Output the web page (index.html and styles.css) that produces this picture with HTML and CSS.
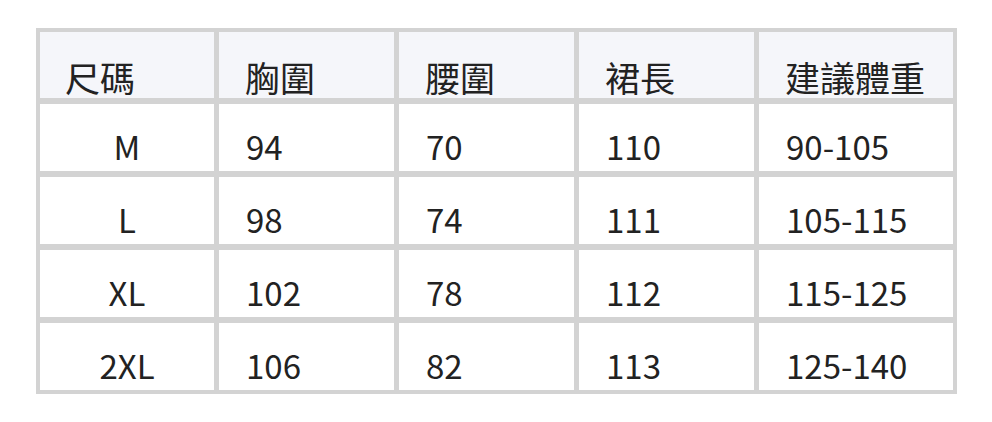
FILE: index.html
```html
<!DOCTYPE html>
<html lang="zh-Hant">
<head>
<meta charset="utf-8">
<title>尺碼表</title>
<link rel="stylesheet" href="styles.css">
</head>
<body>
<div class="size-table">
  <div class="cell head first">尺碼</div>
  <div class="cell head">胸圍</div>
  <div class="cell head">腰圍</div>
  <div class="cell head">裙長</div>
  <div class="cell head">建議體重</div>

  <div class="cell center">M</div>
  <div class="cell">94</div>
  <div class="cell">70</div>
  <div class="cell">110</div>
  <div class="cell">90-105</div>

  <div class="cell center">L</div>
  <div class="cell">98</div>
  <div class="cell">74</div>
  <div class="cell">111</div>
  <div class="cell">105-115</div>

  <div class="cell center">XL</div>
  <div class="cell">102</div>
  <div class="cell">78</div>
  <div class="cell">112</div>
  <div class="cell">115-125</div>

  <div class="cell center">2XL</div>
  <div class="cell">106</div>
  <div class="cell">82</div>
  <div class="cell">113</div>
  <div class="cell">125-140</div>
</div>
</body>
</html>
```
FILE: styles.css
```css
html, body {
  margin: 0;
  padding: 0;
  background: #ffffff;
}

body {
  padding: 28px 0 0 36px;
  font-family: "Noto Sans CJK TC", "Noto Sans", sans-serif;
  color: #222222;
}

.size-table {
  width: 913px;
  height: 358px;
  display: grid;
  grid-template-columns: 174px 175px 175px 175px 194px;
  grid-template-rows: 66px repeat(4, 1fr);
  column-gap: 5px;
  row-gap: 6px;
  padding: 4px;
  background: #d3d3d3;
}

.cell {
  background: #ffffff;
  display: flex;
  align-items: flex-end;
  padding: 0 0 4px 27px;
  font-size: 33px;
  line-height: 1.2;
  white-space: nowrap;
}

.cell.head {
  background: #f5f6fa;
  font-size: 35px;
  padding-left: 26px;
  padding-bottom: 0;
}

.cell.head.first {
  padding-left: 25px;
}

.cell.center {
  justify-content: center;
  padding-left: 0;
}
```
